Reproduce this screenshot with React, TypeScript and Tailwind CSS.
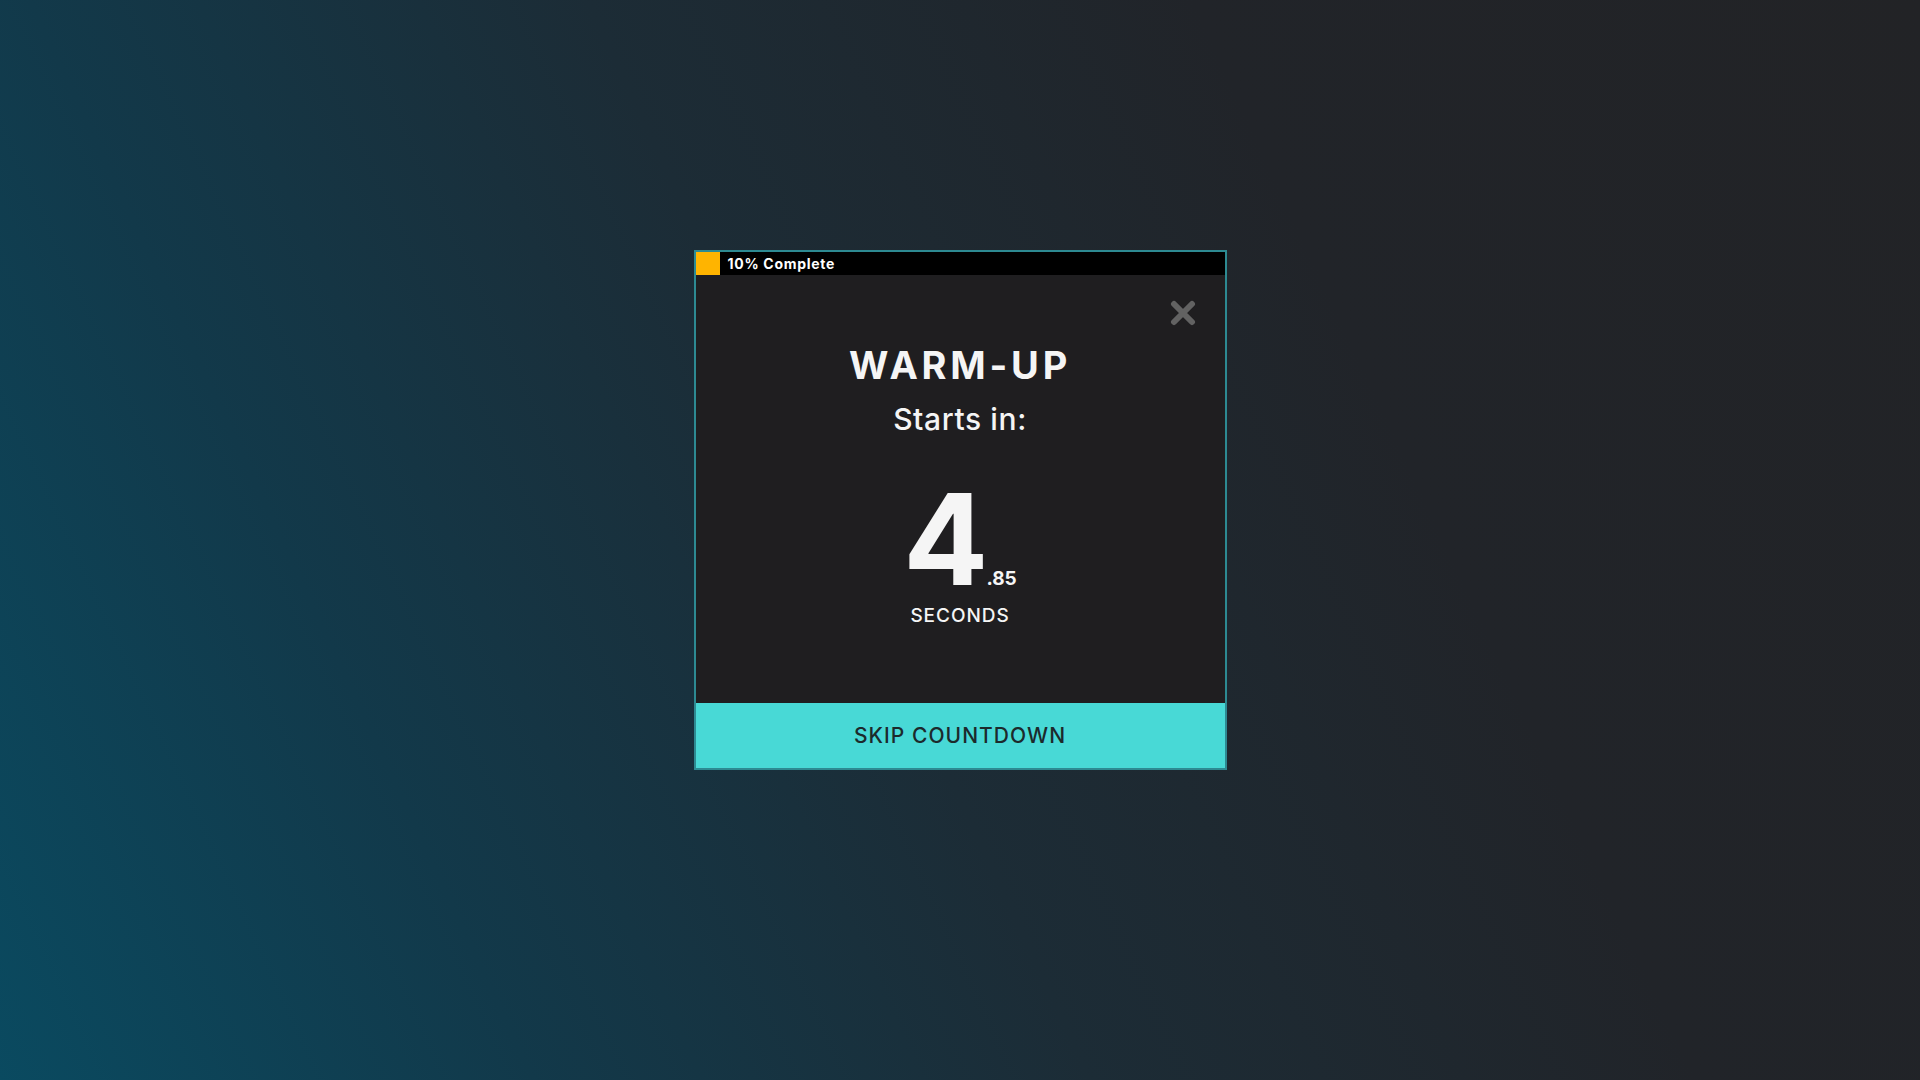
import React from 'react';

const font = { fontFamily: 'Inter, "Liberation Sans", sans-serif' };

const CloseIcon: React.FC = () => (
    <svg width="26" height="26" viewBox="0 0 26 26" fill="none">
        <path d="M4 4 L22 22 M22 4 L4 22" stroke="#626262" strokeWidth="6" strokeLinecap="round" />
    </svg>
);

const App: React.FC = () => {
    const percent = 10;
    const seconds = 4;
    const fraction = '.85';

    return (
        <div
            className="min-h-screen w-full bg-[linear-gradient(65deg,#0a4a60_0%,#12394a_22%,#1c2c36_45%,#212429_70%,#222326_100%)] pt-[250px]"
            style={font}
        >
            <div className="mx-auto w-[533px] border-2 border-[#2d8a92] bg-[#1f1e20]">
                {/* progress */}
                <div className="flex h-[23px] items-center bg-black">
                    <div className="h-full w-[24px] bg-[#ffb400]" />
                    <span className="ml-[8px] text-[14px] font-bold tracking-[0.05em] text-white">{percent}% Complete</span>
                </div>

                <div className="relative flex h-[428px] flex-col items-center pt-[71px]">
                    <button className="absolute right-[29px] top-[25px]">
                        <CloseIcon />
                    </button>

                    <h1 className="text-[38px] font-bold leading-none tracking-[0.1em] text-[#f5f5f5]">WARM-UP</h1>
                    <p className="mt-[20px] text-[30px] font-medium leading-none tracking-[0.02em] text-[#f5f5f5]">Starts in:</p>

                    <div className="mt-[52px] flex items-baseline">
                        <span className="text-[126px] font-bold leading-[0.85] text-[#f5f5f5]">{seconds}</span>
                        <span className="-ml-[2px] text-[19px] font-bold leading-none text-[#f5f5f5]">{fraction}</span>
                    </div>
                    <p className="mt-[13px] text-[19px] font-medium leading-none tracking-[0.05em] text-[#f5f5f5]">SECONDS</p>
                </div>

                <button className="flex h-[65px] w-full items-center justify-center bg-[#48d9d6] text-[21px] font-medium tracking-[0.05em] text-[#1c2a2c]">
                    SKIP COUNTDOWN
                </button>
            </div>
        </div>
    );
};

export default App;
